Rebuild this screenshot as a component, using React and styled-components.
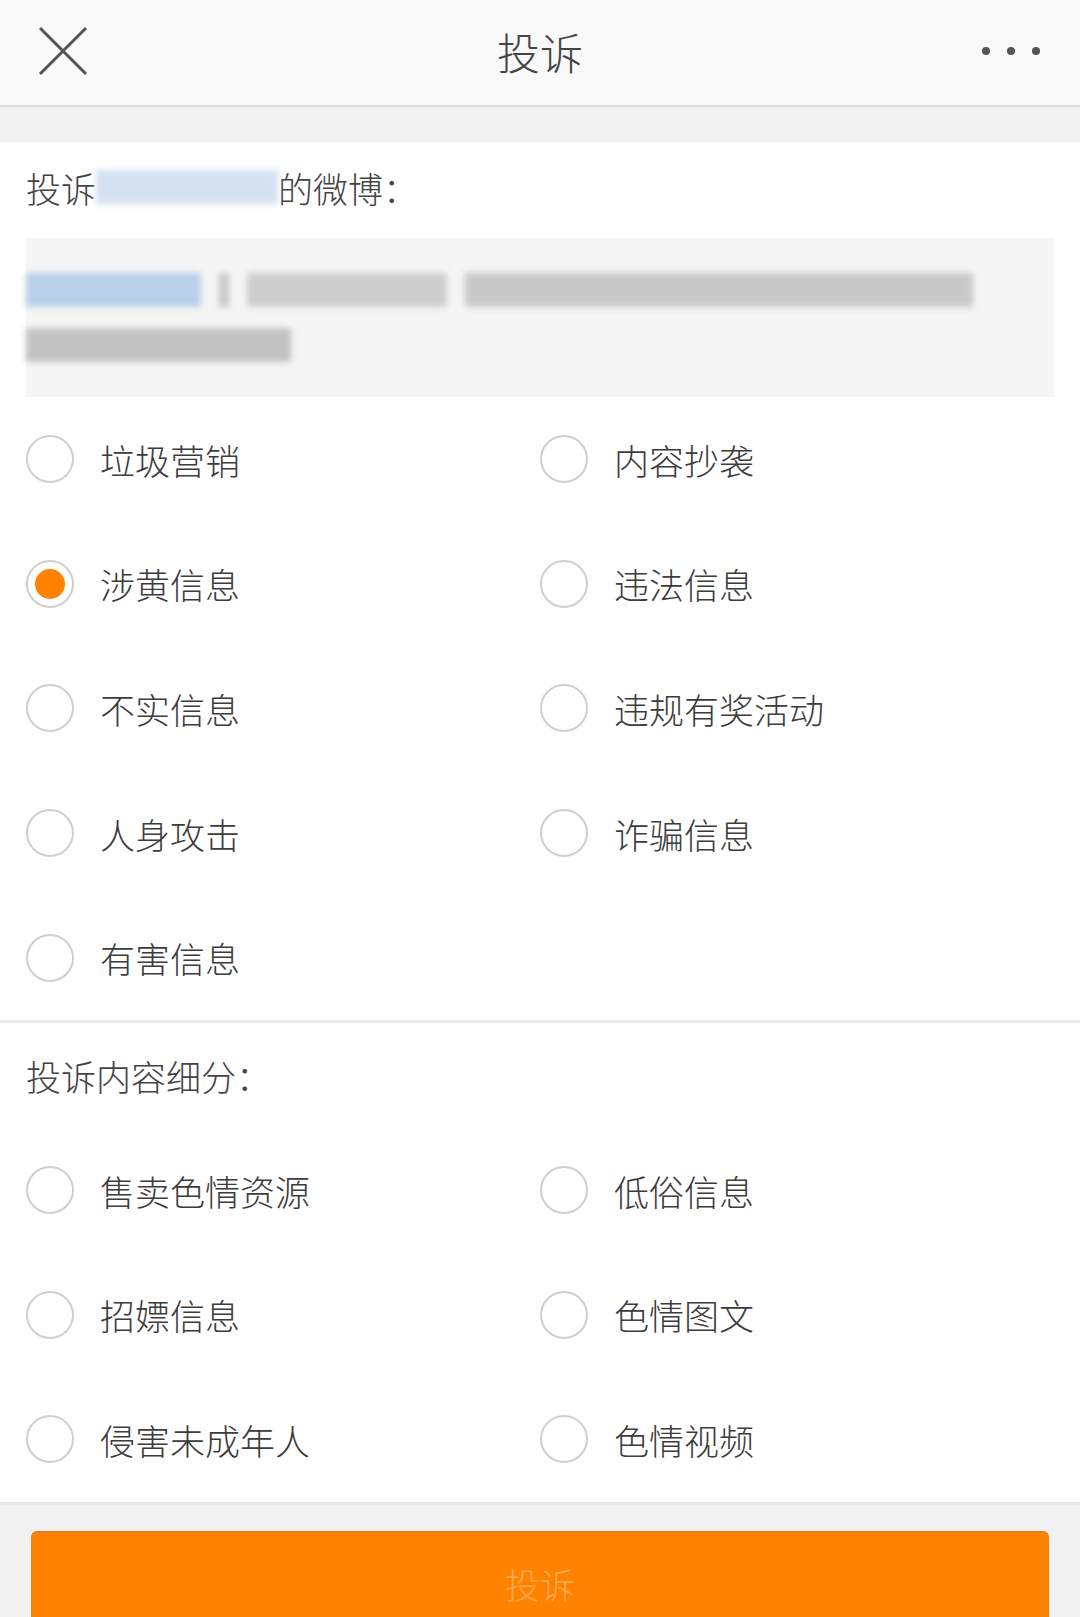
import React from "react";
import styled, { createGlobalStyle } from "styled-components";

const GlobalStyle = createGlobalStyle`
  html, body {
    margin: 0;
    padding: 0;
    background: #f2f2f2;
  }
  body {
    font-family: "Noto Sans CJK SC", "Noto Sans", sans-serif;
    font-weight: 300;
    color: #3c3c3c;
  }
`;

const Page = styled.div`
  width: 1080px;
  height: 1617px;
  overflow: hidden;
  background: #f2f2f2;
`;

const Header = styled.header`
  height: 105px;
  background: #f9f9f9;
  border-bottom: 2px solid #dcdcdc;
  display: grid;
  grid-template-columns: 130px 1fr 130px;
  align-items: center;
`;

const IconButton = styled.div`
  display: flex;
  align-items: center;
  justify-content: ${({ right }) => (right ? "flex-end" : "flex-start")};
  padding: ${({ right }) => (right ? "0 40px 4px 0" : "0 0 4px 38px")};
`;

const Title = styled.h1`
  margin: 0 0 4px;
  text-align: center;
  font-size: 43px;
  font-weight: 300;
  color: #444;
`;

const Dots = styled.div`
  display: flex;
  gap: 17px;
  & span {
    width: 8px;
    height: 8px;
    border-radius: 50%;
    background: #555;
  }
`;

const Band = styled.div`
  height: 35px;
  background: #f2f2f2;
`;

const Section = styled.section`
  background: #fff;
  padding: 0 26px;
  border-bottom: 3px solid #e9e9e9;
`;

const SectionTitle = styled.div`
  height: ${({ h }) => h}px;
  display: flex;
  align-items: center;
  font-size: 35px;
  color: #444;
  box-sizing: border-box;
`;

const Smudge = styled.span`
  display: inline-block;
  width: ${({ w }) => w}px;
  height: 34px;
  background: ${({ c }) => c};
  filter: blur(3px);
  opacity: 0.8;
`;

const Quote = styled.div`
  margin-top: 6px;
  height: 159px;
  background: #f5f5f5;
  padding: 35px 0 0 0;
  box-sizing: border-box;
  display: flex;
  flex-direction: column;
  gap: 21px;
`;

const QuoteLine = styled.div`
  display: flex;
  align-items: center;
  gap: ${({ gap }) => gap || 0}px;
`;

const Grid = styled.div`
  display: grid;
  grid-template-columns: 514px 1fr;
  grid-auto-rows: 124.6px;
`;

const Option = styled.label`
  display: flex;
  align-items: center;
  gap: 26px;
  font-size: 35px;
  color: #3c3c3c;
`;

const Radio = styled.span`
  width: 44px;
  height: 44px;
  border-radius: 50%;
  border: 2px solid #cfcfcf;
  display: flex;
  align-items: center;
  justify-content: center;
  flex-shrink: 0;
  &::after {
    content: "";
    width: 30px;
    height: 30px;
    border-radius: 50%;
    background: ${({ checked }) => (checked ? "#ff8200" : "transparent")};
  }
`;

const Footer = styled.div`
  padding: 26px 31px 0 31px;
`;

const SubmitButton = styled.div`
  height: 102px;
  background: #ff8200;
  border-radius: 6px;
  border-top: 2px solid #f07a10;
  display: flex;
  align-items: center;
  justify-content: center;
  font-size: 35px;
  color: #ffa94d;
`;

const mainOptions = [
  ["垃圾营销", "内容抄袭"],
  ["涉黄信息", "违法信息"],
  ["不实信息", "违规有奖活动"],
  ["人身攻击", "诈骗信息"],
  ["有害信息", null],
];

const subOptions = [
  ["售卖色情资源", "低俗信息"],
  ["招嫖信息", "色情图文"],
  ["侵害未成年人", "色情视频"],
];

const OptionGrid = ({ rows, checked }) => (
  <Grid>
    {rows.flat().map((label, i) =>
      label ? (
        <Option key={i}>
          <Radio checked={label === checked} />
          {label}
        </Option>
      ) : (
        <div key={i} />
      )
    )}
  </Grid>
);

export default function App() {
  return (
    <Page>
      <GlobalStyle />
      <Header>
        <IconButton>
          <svg width="50" height="50" viewBox="0 0 50 50">
            <path d="M2 2 L48 48 M48 2 L2 48" stroke="#555" strokeWidth="3" fill="none" />
          </svg>
        </IconButton>
        <Title>投诉</Title>
        <IconButton right>
          <Dots>
            <span />
            <span />
            <span />
          </Dots>
        </IconButton>
      </Header>
      <Band />
      <Section>
        <SectionTitle h={90}>
          投诉
          <Smudge w={182} c="#c9d9ec" />
          的微博：
        </SectionTitle>
        <Quote>
          <QuoteLine gap={18}>
            <Smudge w={175} c="#a9c6e6" />
            <Smudge w={10} c="#bbb" />
            <Smudge w={200} c="#c4c4c4" />
            <Smudge w={508} c="#bdbdbd" />
          </QuoteLine>
          <QuoteLine>
            <Smudge w={265} c="#b5b5b5" />
          </QuoteLine>
        </Quote>
        <OptionGrid rows={mainOptions} checked="涉黄信息" />
      </Section>
      <Section>
        <SectionTitle h={105}>投诉内容细分：</SectionTitle>
        <OptionGrid rows={subOptions} />
      </Section>
      <Footer>
        <SubmitButton>投诉</SubmitButton>
      </Footer>
    </Page>
  );
}
